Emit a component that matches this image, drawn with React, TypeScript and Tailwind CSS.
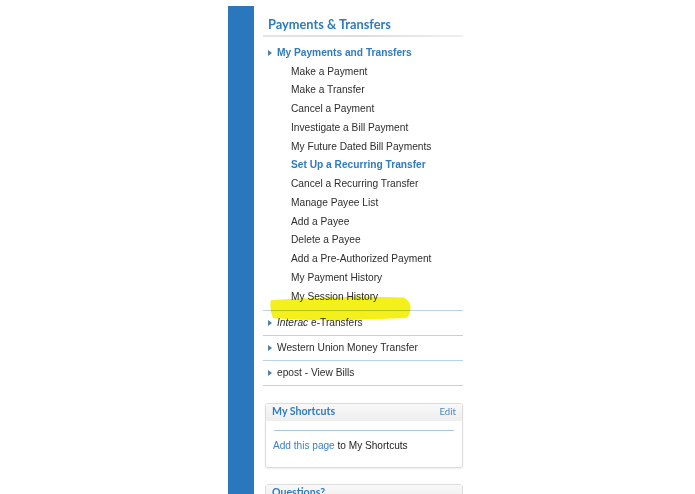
import type { ReactNode } from 'react';

// ---------------------------------------------------------------------------
// Data
// ---------------------------------------------------------------------------

const paymentLinks = [
  { label: 'Make a Payment' },
  { label: 'Make a Transfer' },
  { label: 'Cancel a Payment' },
  { label: 'Investigate a Bill Payment' },
  { label: 'My Future Dated Bill Payments' },
  { label: 'Set Up a Recurring Transfer', active: true },
  { label: 'Cancel a Recurring Transfer' },
  { label: 'Manage Payee List' },
  { label: 'Add a Payee' },
  { label: 'Delete a Payee' },
  { label: 'Add a Pre-Authorized Payment' },
  { label: 'My Payment History' },
  { label: 'My Session History' },
];

const sans = "font-['Liberation_Sans',Arial,sans-serif]";
const heading = "font-['Lato','Open_Sans',sans-serif]";

// ---------------------------------------------------------------------------
// Small pieces
// ---------------------------------------------------------------------------

function Caret() {
  return (
    <svg width="4" height="6" viewBox="0 0 4 6" className="shrink-0">
      <path d="M0 0 L4 3 L0 6 Z" fill="#4a7fae" />
    </svg>
  );
}

function CollapsedRow({ children }: { children: ReactNode }) {
  return (
    <div className="border-b border-[#bcd2e6]">
      <div className="flex h-[24px] items-center gap-[5px] pl-[5px] text-[10.2px] text-[#2d2d2d]">
        <Caret />
        <span>{children}</span>
      </div>
    </div>
  );
}

function Highlight() {
  // highlighter stroke drawn over "My Session History"
  return (
    <svg
      className="pointer-events-none absolute left-0 top-0 mix-blend-multiply"
      width="695"
      height="494"
      viewBox="0 0 695 494"
    >
      <path
        d="M271 300 L300 298.5 L360 296.5 L404 297.5 Q411 301 410.5 309 Q410 316 406 318 L380 319 L335 320.5 L292 319.5 L273 318 Q269 309 271 300 Z"
        fill="#f4f01c"
      />
    </svg>
  );
}

// ---------------------------------------------------------------------------
// Page
// ---------------------------------------------------------------------------

export default function App() {
  return (
    <div className={`relative flex h-[494px] w-[695px] overflow-hidden bg-white ${sans}`}>
      <div className="w-[228px] shrink-0" />
      <div className="mt-[6px] w-[26px] shrink-0 bg-[#2a77bd]" />

      <div className="w-[209px] shrink-0 pl-[9px]">
        {/* Title */}
        <div className="flex h-[35px] items-end pb-[4px] pl-[5px]">
          <h2 className={`text-[12.8px] font-bold leading-none text-[#2e7cbf] ${heading}`}>
            Payments &amp; Transfers
          </h2>
        </div>
        <div className="h-[2px] bg-linear-to-r from-[#e4e4e4] via-[#dddddd] to-[#f0f0f0] blur-[0.6px]" />

        {/* Expanded section */}
        <div className="mt-[7px] border-b border-[#bcd2e6] pb-[4px]">
          <div className="flex h-[18px] items-center gap-[5px] pl-[5px] text-[10.2px] font-bold text-[#2f7bc0]">
            <Caret />
            <span>My Payments and Transfers</span>
          </div>
          <ul className="pl-[28px]">
            {paymentLinks.map((link) => (
              <li
                key={link.label}
                className={
                  link.active
                    ? 'flex h-[18.75px] items-center text-[10.2px] font-bold text-[#2f7bc0]'
                    : 'flex h-[18.75px] items-center text-[10.2px] text-[#2d2d2d]'
                }
              >
                {link.label}
              </li>
            ))}
          </ul>
        </div>

        <CollapsedRow>
          <i>Interac</i> e-Transfers
        </CollapsedRow>
        <CollapsedRow>Western Union Money Transfer</CollapsedRow>
        <CollapsedRow>epost - View Bills</CollapsedRow>

        {/* My Shortcuts */}
        <div className="ml-[2px] mt-[17px] h-[65px] rounded-[3px] border border-[#dddddd] shadow-[0_1px_2px_rgba(0,0,0,0.08)]">
          <div className="flex h-[17px] items-center justify-between bg-linear-to-b from-[#f8f8f8] to-[#eeeeee] px-[6px]">
            <span className={`text-[10.6px] font-bold text-[#2e7cbf] ${heading}`}>My Shortcuts</span>
            <span className={`text-[9.6px] text-[#4a88c4] ${heading}`}>Edit</span>
          </div>
          <div className="px-[7px] pt-[9px]">
            <div className="mx-px h-px bg-[#a9c7e3]" />
            <p className="mt-[9px] text-[10.1px] leading-[12px] text-[#222]">
              <span className="text-[#3b80c2]">Add this page</span> to My Shortcuts
            </p>
          </div>
        </div>

        {/* Questions? (cut off by the viewport, as in the page) */}
        <div className="ml-[2px] mt-[16px] h-[40px] rounded-[3px] border border-[#dddddd]">
          <div className="flex h-[17px] items-center bg-linear-to-b from-[#f8f8f8] to-[#eeeeee] px-[6px]">
            <span className={`text-[10.6px] font-bold text-[#2e7cbf] ${heading}`}>Questions?</span>
          </div>
        </div>
      </div>

      <Highlight />
    </div>
  );
}
